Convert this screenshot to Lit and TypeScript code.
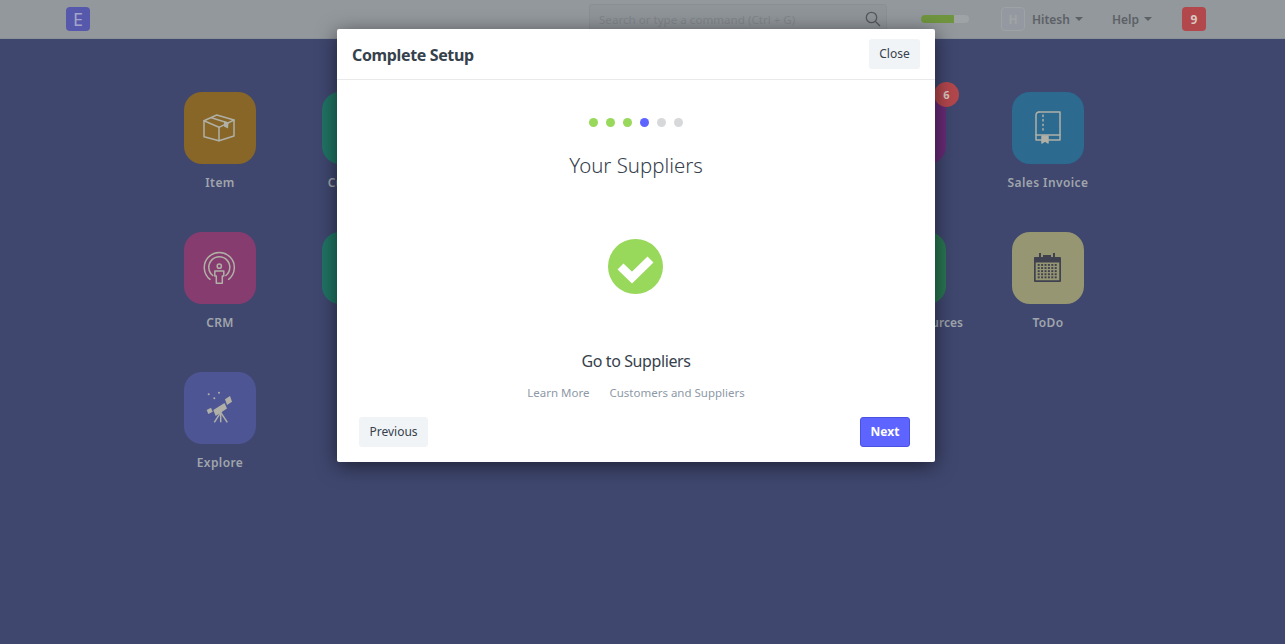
import { LitElement, html, css, svg } from "lit";
import { customElement } from "lit/decorators.js";

const stroke = (c: unknown) => svg`<g fill="none" stroke="currentColor" stroke-width="1.5" stroke-linejoin="round" stroke-linecap="round">${c}</g>`;

const icons: Record<string, unknown> = {
  box: stroke(svg`<path d="M1 9.7 L16 16.3 L16 29.7 L1 25.7 Z"/><path d="M16 16.3 L31 9 L31 25 L16 29.7"/><path d="M1 9.7 L13.7 4 L31 9"/><path d="M8.5 6.8 L25 12"/><path fill="currentColor" stroke="none" d="M21 10 L25.5 11.5 L25 17.5 L21 15.5 Z"/>`),
  book: stroke(svg`<path d="M8 1 H29 V29 H17"/><path d="M11 29 H5 V4 A3 3 0 0 1 8 1"/><path d="M5 24 H29"/><path d="M12 4 V19" stroke-dasharray="1.4 3.2"/><path d="M11 25 H17 V32 L14 29.8 L11 32 Z" fill="currentColor"/>`),
  crm: stroke(svg`<path d="M7 28.3 A15 15 0 1 1 25.6 28.3"/><path d="M9.8 24.5 A10.5 10.5 0 1 1 22.8 24.5"/><circle cx="16.3" cy="15.2" r="2.1"/><path d="M11.8 20 H20.8 V25 H19.3 V32.3 H13.3 V25 H11.8 Z"/>`),
  scope: svg`<g fill="currentColor"><path d="M10.3 19 L21.5 12 L24 17.5 L12.7 25 Z"/><path d="M22 8.3 L27 5 L29 10.7 L24 14 Z"/><path d="M3.7 19 L8 16.7 L9.7 20.7 L5.3 23 Z"/><circle cx="5.7" cy="3.3" r="1"/><circle cx="16" cy="1.7" r="1"/><circle cx="11.3" cy="7.3" r="1"/></g><g fill="none" stroke="currentColor" stroke-width="1.5"><path d="M17.7 21.3 L11.3 31.3"/><path d="M17.7 21.3 V31.3"/><path d="M17.7 21.3 L24.3 31.3"/></g>`,
  cal: svg`<g fill="#3f4150"><path fill-rule="evenodd" d="M3.5 6 H12 V4 H20 V6 H29 A1 1 0 0 1 30 7 V30 A1 1 0 0 1 29 31 H4 A1 1 0 0 1 3 30 V7 A1 1 0 0 1 3.5 6 Z M4.7 11.5 V29.3 H28.3 V11.5 Z"/>${[0,1,2,3,4].map((r)=>[0,1,2,3,4,5].map((c)=>svg`<rect x="${6.7+c*3.4}" y="${13+r*3.1}" width="2" height="1.9"/>`))}</g><g fill="#3f4150"><rect x="8" y="2" width="2" height="5"/><rect x="22" y="2" width="2" height="5"/></g>`,
};

const tiles = [
  { label: "Item", bg: "#876627", icon: "box" },
  { label: "Customer", bg: "#207364", icon: "" },
  { label: "", bg: "#3a6fa0", icon: "" },
  { label: "", bg: "#3a6fa0", icon: "" },
  { label: "", bg: "#3a6fa0", icon: "" },
  { label: "", bg: "#682a76", icon: "", badge: "6" },
  { label: "Sales Invoice", bg: "#2c6a90", icon: "book" },
  { label: "CRM", bg: "#873c6f", icon: "crm" },
  { label: "Stock", bg: "#207364", icon: "" },
  { label: "", bg: "#3a6fa0", icon: "" },
  { label: "", bg: "#3a6fa0", icon: "" },
  { label: "", bg: "#3a6fa0", icon: "" },
  { label: "Human Resources", bg: "#287652", icon: "", tight: true },
  { label: "ToDo", bg: "#979672", icon: "cal" },
  { label: "Explore", bg: "#4e5594", icon: "scope" },
];

@customElement("app-root")
export class AppRoot extends LitElement {
  static styles = css`
    :host { display: block; position: relative; width: 1285px; height: 644px; overflow: hidden; background: #3f476f; font-family: "Noto Sans", sans-serif; color: #36414c; }
    .nav { height: 39px; box-sizing: border-box; background: #93989d; border-bottom: 1px solid #8a8f98; display: flex; align-items: center; padding-left: 66px; }
    .logo { width: 24px; height: 24px; border-radius: 4px; background: #5558ab; color: #a3a6c9; display: flex; align-items: center; justify-content: center; font-size: 18px; }
    .search { margin-left: 499px; width: 298px; height: 30px; box-sizing: border-box; border: 1px solid #8a8f94; border-radius: 3px; background: #8f9499; display: flex; align-items: center; justify-content: space-between; padding: 0 5px 0 9px; font-size: 11.6px; color: #80858a; }
    .search svg { width: 16px; height: 16px; color: #54585c; }
    .progress { margin-left: 34px; width: 48px; height: 8px; background: #9ea3a6; border-radius: 4px; overflow: hidden; }
    .progress div { width: 33px; height: 100%; background: #70953f; }
    .avatar { margin-left: 32px; width: 24px; height: 24px; box-sizing: border-box; border: 1px solid #9ea2a6; border-radius: 4px; background: #9498a0; color: #a0a4a6; font-size: 12px; display: flex; align-items: center; justify-content: center; font-weight: 700; }
    .menu { font-size: 12px; font-weight: 600; color: #5c6166; display: flex; align-items: center; gap: 5px; }
    .menu::after { content: ""; border: 4px solid transparent; border-top-color: #5c6166; border-bottom: 0; }
    .hitesh { margin-left: 7px; }
    .help { margin-left: 29px; }
    .notif { margin-left: 30px; width: 24px; height: 24px; border-radius: 4px; background: #b2474c; color: #d8c8c0; font-size: 12px; font-weight: 700; display: flex; align-items: center; justify-content: center; }
    .grid { display: grid; grid-template-columns: repeat(7, 72px); column-gap: 66px; row-gap: 56px; padding: 53px 0 0 184px; }
    .cell { position: relative; width: 72px; display: flex; flex-direction: column; align-items: center; }
    .tile { width: 72px; height: 72px; border-radius: 18px; display: flex; align-items: center; justify-content: center; color: #b0b0a6; }
    .tile svg { width: 34px; height: 34px; }
    .label { height: 0; margin-top: 12px; white-space: nowrap; font-size: 12px; line-height: 14px; font-weight: 600; letter-spacing: .4px; color: #a0a5ac; }
    .label.tight { letter-spacing: 0; }
    .badge { position: absolute; top: -10px; right: -13px; width: 25px; height: 25px; border-radius: 50%; background: #b2474c; color: #d8c8c0; font-size: 11px; font-weight: 700; display: flex; align-items: center; justify-content: center; }
    .modal { position: absolute; left: 337px; top: 29px; width: 598px; height: 433px; background: #fff; border-radius: 2px; box-shadow: 0 4px 20px rgba(0,0,0,.55); display: flex; flex-direction: column; }
    .head { height: 51px; box-sizing: border-box; border-bottom: 1px solid #e7e9ea; display: flex; align-items: center; justify-content: space-between; padding: 0 15px; }
    .head h4 { margin: 2px 0 0; font-size: 16px; letter-spacing: -.36px; font-weight: 700; color: #36414c; }
    .btn { height: 30px; box-sizing: border-box; border-radius: 3px; background: #f1f4f6; color: #36414c; font-size: 12px; padding-bottom: 1px; display: flex; align-items: center; justify-content: center; }
    .close { width: 51px; }
    .body { flex: 1; display: flex; flex-direction: column; align-items: center; }
    .dots { display: flex; gap: 8px; margin-top: 38px; }
    .dot { width: 9px; height: 9px; border-radius: 50%; background: #d6d8da; }
    .dot.done { background: #98d85b; }
    .dot.active { background: #5e64ff; }
    .title { margin: 24px 0 0; height: 28px; font-size: 20.4px; line-height: 28px; font-weight: 300; color: #36414c; }
    .check { margin: 60px 1px 0 0; width: 55px; height: 55px; display: block; }
    .action { margin-top: 56px; font-size: 16px; letter-spacing: -.4px; line-height: 22px; color: #36414c; }
    .links { margin-top: 13px; display: flex; gap: 20px; font-size: 11.5px; line-height: 16px; color: #8d99a6; }
    .foot { display: flex; justify-content: space-between; padding: 0 25px 15px 22px; }
    .prev { width: 69px; }
    .next { width: 50px; background: #5e64ff; color: #fff; font-weight: 700; border: 1px solid #4a50e0; }
  `;

  render() {
    return html`
      <div class="nav">
        <div class="logo">E</div>
        <div class="search">
          <span>Search or type a command (Ctrl + G)</span>
          <svg viewBox="0 0 16 16" fill="none" stroke="currentColor" stroke-width="1.3"><circle cx="6.5" cy="6.5" r="5.2"/><path d="M10.5 10.5 L15 15"/></svg>
        </div>
        <div class="progress"><div></div></div>
        <div class="avatar">H</div>
        <div class="menu hitesh">Hitesh</div>
        <div class="menu help">Help</div>
        <div class="notif">9</div>
      </div>
      <div class="grid">
        ${tiles.map((t) => html`
          <div class="cell">
            <div class="tile" style="background:${t.bg}">
              ${t.icon ? html`<svg viewBox="0 0 34 34">${icons[t.icon]}</svg>` : ""}
            </div>
            ${t.badge ? html`<div class="badge">${t.badge}</div>` : ""}
            ${t.label ? html`<div class="label ${t.tight ? "tight" : ""}">${t.label}</div>` : ""}
          </div>`)}
      </div>
      <div class="modal">
        <div class="head">
          <h4>Complete Setup</h4>
          <div class="btn close">Close</div>
        </div>
        <div class="body">
          <div class="dots">
            <span class="dot done"></span><span class="dot done"></span><span class="dot done"></span>
            <span class="dot active"></span><span class="dot"></span><span class="dot"></span>
          </div>
          <h3 class="title">Your Suppliers</h3>
          <svg class="check" viewBox="0 0 55 55">
            <circle cx="27.5" cy="27.5" r="27.5" fill="#98d85b"/>
            <path d="M12.5 27.5 L24 38.5 L42.5 20.5" fill="none" stroke="#fff" stroke-width="8.5" stroke-linejoin="miter"/>
          </svg>
          <div class="action">Go to Suppliers</div>
          <div class="links"><span>Learn More</span><span>Customers and Suppliers</span></div>
        </div>
        <div class="foot">
          <div class="btn prev">Previous</div>
          <div class="btn next">Next</div>
        </div>
      </div>
    `;
  }
}
